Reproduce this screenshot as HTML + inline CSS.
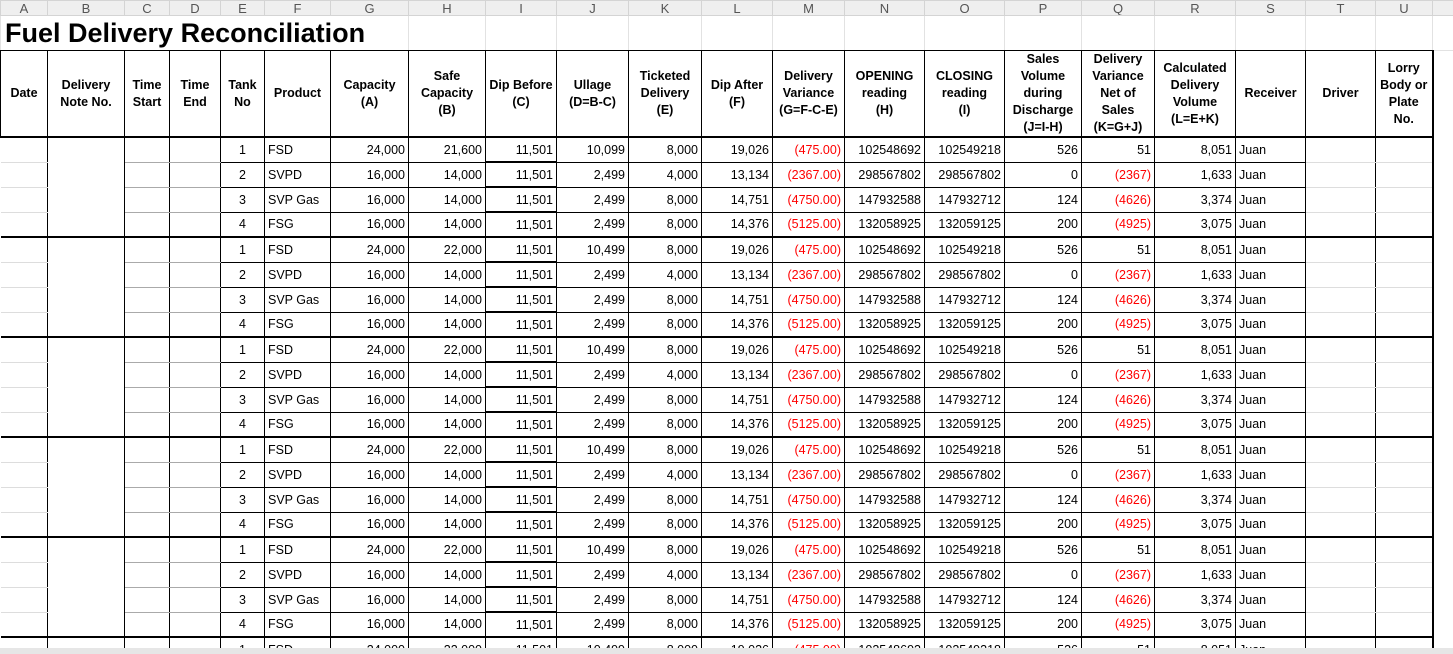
<!DOCTYPE html>
<html><head><meta charset="utf-8"><style>
*{margin:0;padding:0;box-sizing:border-box}
html,body{width:1453px;height:654px;overflow:hidden}
body{background:#fff;font-family:"Liberation Sans",Arial,sans-serif;position:relative}
table{border-collapse:collapse;table-layout:fixed;width:1453px;position:absolute;left:0;top:0}
td{font-size:12.5px;height:25px;border:1px solid #000;padding:0 3px;white-space:nowrap;overflow:hidden;text-align:right;color:#000}
tr.L td{height:15px;background:#efefef;border:1px solid #d4d4d4;text-align:center;color:#555;font-size:13px;line-height:13px;padding:0}
tr.T td{height:35px;border:1px solid #e2e2e2;border-bottom:1px solid #000}
tr.T td.t{font-size:27px;font-weight:bold;text-align:left;overflow:visible;padding-left:4px;border-right:none}
tr.H td{height:86px;font-weight:bold;text-align:center;white-space:nowrap;line-height:17px;border-bottom:2px solid #000;padding:0 1px;font-size:12.5px}
td.a{border-left:none;border-top:1px solid #ddd;border-bottom:1px solid #ddd}
td.b{border-top:none;border-bottom:none}
td.c{border-top:1px solid #aaa;border-bottom:1px solid #aaa}
td.n{text-align:center}
td.p{text-align:left}
td.r{color:#f00}
td.i{border-bottom:2px solid #000}
td.tu{border-top:1px solid #ddd;border-bottom:1px solid #ddd}
td.u{border-right:2px solid #000}
td.v{border:none;border-left:2px solid #000}
tr.g td{border-bottom:2px solid #000}
tr.g td.v{border-bottom:none}
.bar{position:absolute;left:0;top:648px;width:1453px;height:6px;background:#e6e6e6}
</style></head><body>
<table>
<colgroup><col style="width:47px"><col style="width:77px"><col style="width:45px"><col style="width:51px"><col style="width:44px"><col style="width:66px"><col style="width:78px"><col style="width:77px"><col style="width:71px"><col style="width:72px"><col style="width:73px"><col style="width:71px"><col style="width:72px"><col style="width:80px"><col style="width:80px"><col style="width:77px"><col style="width:73px"><col style="width:81px"><col style="width:70px"><col style="width:70px"><col style="width:57px"><col style="width:21px"></colgroup>
<tr class="L"><td>A</td><td>B</td><td>C</td><td>D</td><td>E</td><td>F</td><td>G</td><td>H</td><td>I</td><td>J</td><td>K</td><td>L</td><td>M</td><td>N</td><td>O</td><td>P</td><td>Q</td><td>R</td><td>S</td><td>T</td><td>U</td><td></td></tr>
<tr class="T"><td class="t" colspan="7">Fuel Delivery Reconciliation</td><td></td><td></td><td></td><td></td><td></td><td></td><td></td><td></td><td></td><td></td><td></td><td></td><td></td><td></td><td style="border-bottom:1px solid #e2e2e2"></td></tr>
<tr class="H"><td>Date</td><td>Delivery<br>Note No.</td><td>Time<br>Start</td><td>Time<br>End</td><td>Tank<br>No</td><td>Product</td><td>Capacity<br>(A)</td><td>Safe<br>Capacity<br>(B)</td><td>Dip Before<br>(C)</td><td>Ullage<br>(D=B-C)</td><td>Ticketed<br>Delivery<br>(E)</td><td>Dip After<br>(F)</td><td>Delivery<br>Variance<br>(G=F-C-E)</td><td>OPENING<br>reading<br>(H)</td><td>CLOSING<br>reading<br>(I)</td><td>Sales<br>Volume<br>during<br>Discharge<br>(J=I-H)</td><td>Delivery<br>Variance<br>Net of<br>Sales<br>(K=G+J)</td><td>Calculated<br>Delivery<br>Volume<br>(L=E+K)</td><td>Receiver</td><td>Driver</td><td class="u">Lorry<br>Body or<br>Plate<br>No.</td><td class="v" style="border-bottom:none"></td></tr>

<tr><td class="a"></td><td class="b"></td><td class="c"></td><td class="c"></td><td class="n">1</td><td class="p">FSD</td><td>24,000</td><td>21,600</td><td class="i">11,501</td><td>10,099</td><td>8,000</td><td>19,026</td><td class="r">(475.00)</td><td>102548692</td><td>102549218</td><td>526</td><td>51</td><td>8,051</td><td class="p">Juan</td><td class="tu"></td><td class="tu u"></td><td class="v"></td></tr>
<tr><td class="a"></td><td class="b"></td><td class="c"></td><td class="c"></td><td class="n">2</td><td class="p">SVPD</td><td>16,000</td><td>14,000</td><td class="i">11,501</td><td>2,499</td><td>4,000</td><td>13,134</td><td class="r">(2367.00)</td><td>298567802</td><td>298567802</td><td>0</td><td class="r">(2367)</td><td>1,633</td><td class="p">Juan</td><td class="tu"></td><td class="tu u"></td><td class="v"></td></tr>
<tr><td class="a"></td><td class="b"></td><td class="c"></td><td class="c"></td><td class="n">3</td><td class="p">SVP Gas</td><td>16,000</td><td>14,000</td><td class="i">11,501</td><td>2,499</td><td>8,000</td><td>14,751</td><td class="r">(4750.00)</td><td>147932588</td><td>147932712</td><td>124</td><td class="r">(4626)</td><td>3,374</td><td class="p">Juan</td><td class="tu"></td><td class="tu u"></td><td class="v"></td></tr>
<tr class="g"><td class="a"></td><td class="b"></td><td class="c"></td><td class="c"></td><td class="n">4</td><td class="p">FSG</td><td>16,000</td><td>14,000</td><td class="i">11,501</td><td>2,499</td><td>8,000</td><td>14,376</td><td class="r">(5125.00)</td><td>132058925</td><td>132059125</td><td>200</td><td class="r">(4925)</td><td>3,075</td><td class="p">Juan</td><td class="tu"></td><td class="tu u"></td><td class="v"></td></tr>

<tr><td class="a"></td><td class="b"></td><td class="c"></td><td class="c"></td><td class="n">1</td><td class="p">FSD</td><td>24,000</td><td>22,000</td><td class="i">11,501</td><td>10,499</td><td>8,000</td><td>19,026</td><td class="r">(475.00)</td><td>102548692</td><td>102549218</td><td>526</td><td>51</td><td>8,051</td><td class="p">Juan</td><td class="tu"></td><td class="tu u"></td><td class="v"></td></tr>
<tr><td class="a"></td><td class="b"></td><td class="c"></td><td class="c"></td><td class="n">2</td><td class="p">SVPD</td><td>16,000</td><td>14,000</td><td class="i">11,501</td><td>2,499</td><td>4,000</td><td>13,134</td><td class="r">(2367.00)</td><td>298567802</td><td>298567802</td><td>0</td><td class="r">(2367)</td><td>1,633</td><td class="p">Juan</td><td class="tu"></td><td class="tu u"></td><td class="v"></td></tr>
<tr><td class="a"></td><td class="b"></td><td class="c"></td><td class="c"></td><td class="n">3</td><td class="p">SVP Gas</td><td>16,000</td><td>14,000</td><td class="i">11,501</td><td>2,499</td><td>8,000</td><td>14,751</td><td class="r">(4750.00)</td><td>147932588</td><td>147932712</td><td>124</td><td class="r">(4626)</td><td>3,374</td><td class="p">Juan</td><td class="tu"></td><td class="tu u"></td><td class="v"></td></tr>
<tr class="g"><td class="a"></td><td class="b"></td><td class="c"></td><td class="c"></td><td class="n">4</td><td class="p">FSG</td><td>16,000</td><td>14,000</td><td class="i">11,501</td><td>2,499</td><td>8,000</td><td>14,376</td><td class="r">(5125.00)</td><td>132058925</td><td>132059125</td><td>200</td><td class="r">(4925)</td><td>3,075</td><td class="p">Juan</td><td class="tu"></td><td class="tu u"></td><td class="v"></td></tr>

<tr><td class="a"></td><td class="b"></td><td class="c"></td><td class="c"></td><td class="n">1</td><td class="p">FSD</td><td>24,000</td><td>22,000</td><td class="i">11,501</td><td>10,499</td><td>8,000</td><td>19,026</td><td class="r">(475.00)</td><td>102548692</td><td>102549218</td><td>526</td><td>51</td><td>8,051</td><td class="p">Juan</td><td class="tu"></td><td class="tu u"></td><td class="v"></td></tr>
<tr><td class="a"></td><td class="b"></td><td class="c"></td><td class="c"></td><td class="n">2</td><td class="p">SVPD</td><td>16,000</td><td>14,000</td><td class="i">11,501</td><td>2,499</td><td>4,000</td><td>13,134</td><td class="r">(2367.00)</td><td>298567802</td><td>298567802</td><td>0</td><td class="r">(2367)</td><td>1,633</td><td class="p">Juan</td><td class="tu"></td><td class="tu u"></td><td class="v"></td></tr>
<tr><td class="a"></td><td class="b"></td><td class="c"></td><td class="c"></td><td class="n">3</td><td class="p">SVP Gas</td><td>16,000</td><td>14,000</td><td class="i">11,501</td><td>2,499</td><td>8,000</td><td>14,751</td><td class="r">(4750.00)</td><td>147932588</td><td>147932712</td><td>124</td><td class="r">(4626)</td><td>3,374</td><td class="p">Juan</td><td class="tu"></td><td class="tu u"></td><td class="v"></td></tr>
<tr class="g"><td class="a"></td><td class="b"></td><td class="c"></td><td class="c"></td><td class="n">4</td><td class="p">FSG</td><td>16,000</td><td>14,000</td><td class="i">11,501</td><td>2,499</td><td>8,000</td><td>14,376</td><td class="r">(5125.00)</td><td>132058925</td><td>132059125</td><td>200</td><td class="r">(4925)</td><td>3,075</td><td class="p">Juan</td><td class="tu"></td><td class="tu u"></td><td class="v"></td></tr>

<tr><td class="a"></td><td class="b"></td><td class="c"></td><td class="c"></td><td class="n">1</td><td class="p">FSD</td><td>24,000</td><td>22,000</td><td class="i">11,501</td><td>10,499</td><td>8,000</td><td>19,026</td><td class="r">(475.00)</td><td>102548692</td><td>102549218</td><td>526</td><td>51</td><td>8,051</td><td class="p">Juan</td><td class="tu"></td><td class="tu u"></td><td class="v"></td></tr>
<tr><td class="a"></td><td class="b"></td><td class="c"></td><td class="c"></td><td class="n">2</td><td class="p">SVPD</td><td>16,000</td><td>14,000</td><td class="i">11,501</td><td>2,499</td><td>4,000</td><td>13,134</td><td class="r">(2367.00)</td><td>298567802</td><td>298567802</td><td>0</td><td class="r">(2367)</td><td>1,633</td><td class="p">Juan</td><td class="tu"></td><td class="tu u"></td><td class="v"></td></tr>
<tr><td class="a"></td><td class="b"></td><td class="c"></td><td class="c"></td><td class="n">3</td><td class="p">SVP Gas</td><td>16,000</td><td>14,000</td><td class="i">11,501</td><td>2,499</td><td>8,000</td><td>14,751</td><td class="r">(4750.00)</td><td>147932588</td><td>147932712</td><td>124</td><td class="r">(4626)</td><td>3,374</td><td class="p">Juan</td><td class="tu"></td><td class="tu u"></td><td class="v"></td></tr>
<tr class="g"><td class="a"></td><td class="b"></td><td class="c"></td><td class="c"></td><td class="n">4</td><td class="p">FSG</td><td>16,000</td><td>14,000</td><td class="i">11,501</td><td>2,499</td><td>8,000</td><td>14,376</td><td class="r">(5125.00)</td><td>132058925</td><td>132059125</td><td>200</td><td class="r">(4925)</td><td>3,075</td><td class="p">Juan</td><td class="tu"></td><td class="tu u"></td><td class="v"></td></tr>

<tr><td class="a"></td><td class="b"></td><td class="c"></td><td class="c"></td><td class="n">1</td><td class="p">FSD</td><td>24,000</td><td>22,000</td><td class="i">11,501</td><td>10,499</td><td>8,000</td><td>19,026</td><td class="r">(475.00)</td><td>102548692</td><td>102549218</td><td>526</td><td>51</td><td>8,051</td><td class="p">Juan</td><td class="tu"></td><td class="tu u"></td><td class="v"></td></tr>
<tr><td class="a"></td><td class="b"></td><td class="c"></td><td class="c"></td><td class="n">2</td><td class="p">SVPD</td><td>16,000</td><td>14,000</td><td class="i">11,501</td><td>2,499</td><td>4,000</td><td>13,134</td><td class="r">(2367.00)</td><td>298567802</td><td>298567802</td><td>0</td><td class="r">(2367)</td><td>1,633</td><td class="p">Juan</td><td class="tu"></td><td class="tu u"></td><td class="v"></td></tr>
<tr><td class="a"></td><td class="b"></td><td class="c"></td><td class="c"></td><td class="n">3</td><td class="p">SVP Gas</td><td>16,000</td><td>14,000</td><td class="i">11,501</td><td>2,499</td><td>8,000</td><td>14,751</td><td class="r">(4750.00)</td><td>147932588</td><td>147932712</td><td>124</td><td class="r">(4626)</td><td>3,374</td><td class="p">Juan</td><td class="tu"></td><td class="tu u"></td><td class="v"></td></tr>
<tr class="g"><td class="a"></td><td class="b"></td><td class="c"></td><td class="c"></td><td class="n">4</td><td class="p">FSG</td><td>16,000</td><td>14,000</td><td class="i">11,501</td><td>2,499</td><td>8,000</td><td>14,376</td><td class="r">(5125.00)</td><td>132058925</td><td>132059125</td><td>200</td><td class="r">(4925)</td><td>3,075</td><td class="p">Juan</td><td class="tu"></td><td class="tu u"></td><td class="v"></td></tr>

<tr><td class="a"></td><td class="b"></td><td class="c"></td><td class="c"></td><td class="n">1</td><td class="p">FSD</td><td>24,000</td><td>22,000</td><td class="i">11,501</td><td>10,499</td><td>8,000</td><td>19,026</td><td class="r">(475.00)</td><td>102548692</td><td>102549218</td><td>526</td><td>51</td><td>8,051</td><td class="p">Juan</td><td class="tu"></td><td class="tu u"></td><td class="v"></td></tr>
</table>
<div class="bar"></div>
</body></html>
